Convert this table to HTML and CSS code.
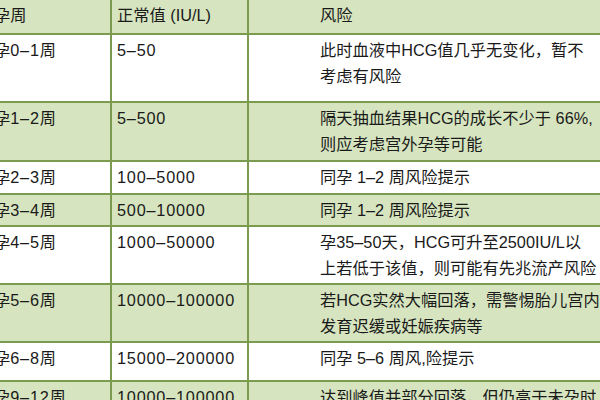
FILE: index.html
```html
<!DOCTYPE html>
<html lang="zh-CN">
<head>
<meta charset="utf-8">
<title>HCG 参考值</title>
<link rel="stylesheet" href="styles.css">
</head>
<body>
<div class="sheet">
<table class="hcg">
  <colgroup>
    <col class="c-week">
    <col class="c-value">
    <col class="c-risk">
  </colgroup>
  <thead>
    <tr class="row green h-head">
      <th>孕周</th>
      <th>正常值 (IU/L)</th>
      <th class="risk">风险</th>
    </tr>
  </thead>
  <tbody>
    <tr class="row white h-r1">
      <td>孕<span class="num">0–1</span>周</td>
      <td class="num">5–50</td>
      <td class="risk">此时血液中HCG值几乎无变化，暂不<br>考虑有风险</td>
    </tr>
    <tr class="row green h-r2">
      <td>孕<span class="num">1–2</span>周</td>
      <td class="num">5–500</td>
      <td class="risk">隔天抽血结果HCG的成长不少于 66%,则应考虑宫外孕等可能</td>
    </tr>
    <tr class="row white h-r3">
      <td>孕<span class="num">2–3</span>周</td>
      <td class="num">100–5000</td>
      <td class="risk">同孕 1–2 周风险提示</td>
    </tr>
    <tr class="row green h-r4">
      <td>孕<span class="num">3–4</span>周</td>
      <td class="num">500–10000</td>
      <td class="risk">同孕 1–2 周风险提示</td>
    </tr>
    <tr class="row white h-r5">
      <td>孕<span class="num">4–5</span>周</td>
      <td class="num">1000–50000</td>
      <td class="risk">孕35–50天，HCG可升至2500IU/L以<br>上若低于该值，则可能有先兆流产风险</td>
    </tr>
    <tr class="row green h-r6">
      <td>孕<span class="num">5–6</span>周</td>
      <td class="num">10000–100000</td>
      <td class="risk">若HCG实然大幅回落，需警惕胎儿宫内发育迟缓或妊娠疾病等</td>
    </tr>
    <tr class="row white h-r7">
      <td>孕<span class="num">6–8</span>周</td>
      <td class="num">15000–200000</td>
      <td class="risk">同孕 5–6 周风,险提示</td>
    </tr>
    <tr class="row green h-r8">
      <td>孕<span class="num">9–12</span>周</td>
      <td class="num">10000–100000</td>
      <td class="risk">达到峰值并部分回落，但仍高于未孕时</td>
    </tr>
  </tbody>
</table>
</div>
</body>
</html>
```

FILE: styles.css
```css
html, body {
  margin: 0;
  padding: 0;
  background: #ffffff;
  overflow: hidden;
}

.sheet {
  width: 600px;
  height: 400px;
  overflow: hidden;
}

.hcg {
  margin: -2px 0 0 -13px;
  border-collapse: collapse;
  table-layout: fixed;
  width: 622px;
  font-family: "Liberation Sans", "Noto Sans CJK SC", sans-serif;
  font-size: 16.25px;
  line-height: 26px;
  color: #1a1a1a;
}

.c-week { width: 123px; }
.c-value { width: 137px; }
.c-risk { width: 362px; }

.hcg th,
.hcg td {
  border: 2px solid #7b9c4e;
  padding: 2px 5px 0 5px;
  vertical-align: top;
  text-align: left;
  font-weight: normal;
  white-space: normal;
}

.hcg .risk {
  padding-left: 71px;
  padding-right: 8px;
}

.num {
  letter-spacing: 0.8px;
}

.green { background: #d6e5bf; }
.white { background: #ffffff; }

.h-head { height: 35px; }
.h-r1 { height: 68px; }
.h-r2 { height: 59px; }
.h-r3 { height: 33px; }
.h-r4 { height: 32px; }
.h-r5 { height: 58px; }
.h-r6 { height: 58px; }
.h-r7 { height: 39px; }
.h-r8 { height: 58px; }
```
